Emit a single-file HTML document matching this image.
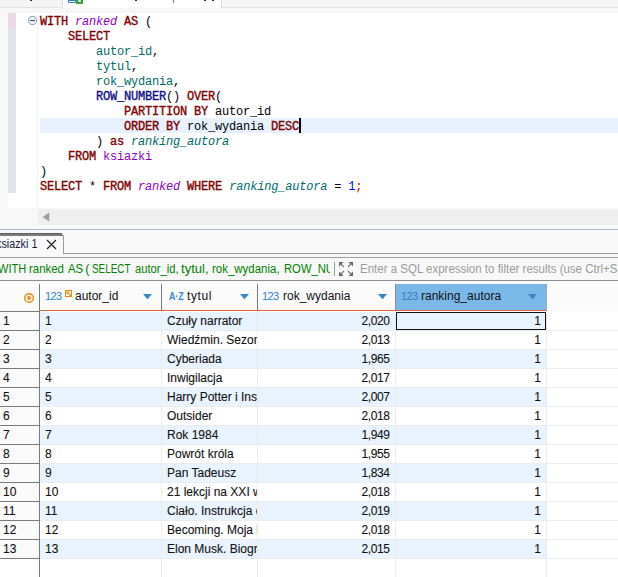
<!DOCTYPE html>
<html><head><meta charset="utf-8">
<style>
*{margin:0;padding:0;box-sizing:border-box}
html,body{width:618px;height:577px;overflow:hidden;background:#fff}
body{position:relative;font-family:"Liberation Sans",sans-serif}
.a{position:absolute}
.code{position:absolute;left:40px;top:15px;font-family:"Liberation Mono",monospace;font-size:12px;letter-spacing:-0.2px;line-height:15px;white-space:pre;color:#000}
.k{color:#800000;font-weight:normal;-webkit-text-stroke:0.35px #800000}
.it{font-style:italic;color:#9000c8}
.cn{color:#006868}
.ti{font-style:italic;color:#006a6a}
.fn{color:#10108a;-webkit-text-stroke:0.35px #10108a}
.tb{color:#9000c8}
.num{color:#0000ff}
.red{color:#e00000}
.tbl{font-size:12px;color:#111;white-space:nowrap}
.rn{position:absolute;left:0;width:40px;height:19px;border-bottom:1px solid #7a7a7a;border-right:1px solid #7a7a7a;padding-left:3px;line-height:18px;background:#fafafa;font-size:12px;color:#111;-webkit-text-stroke:0.1px #111}
.row{position:absolute;left:40px;width:578px;height:19px;border-bottom:1px solid #ececec}
.c{position:absolute;top:0;height:18px;line-height:18px;font-size:12px;color:#111;-webkit-text-stroke:0.1px #111;overflow:hidden;white-space:nowrap}
.num3{line-height:16px;font-size:11px;letter-spacing:-0.6px;color:#2f84d0}
.fw{position:absolute;top:3px;line-height:16px;font-size:12.5px;color:#008000;white-space:pre;transform-origin:0 0}
.vl{position:absolute;width:1px;background:#ececec}
</style></head><body>
<!-- top tab strip -->
<div class="a" style="left:0;top:0;width:618px;height:13px;background:#f6f6f6"></div>
<div class="a" style="left:0;top:7px;width:618px;height:1px;background:#e3e3e3"></div>
<div class="a" style="left:0;top:0;width:63px;height:7px;background:#f4f4f4;border-right:1px solid #dcdcdc"></div>
<div class="a" style="left:63px;top:0;width:159px;height:8px;background:#fff;border-right:1px solid #dcdcdc"></div>
<div class="a" style="left:68px;top:-3px;width:8px;height:6px;background:#2f7ccc;border-radius:1.5px"></div><div class="a" style="left:69px;top:1px;width:6px;height:1px;background:#fff"></div>
<div class="a" style="left:76px;top:0;width:7px;height:4px;background:#3ca23c"></div><div class="a" style="left:78px;top:0;width:3px;height:2px;background:#d8f0d8;border-radius:1px"></div>
<div class="a" style="left:30px;top:0;width:2px;height:1px;background:#333"></div>
<div class="a" style="left:135px;top:0;width:2px;height:1px;background:#333"></div>
<div class="a" style="left:173px;top:0;width:1px;height:3px;background:#3a7bd5"></div>
<div class="a" style="left:204px;top:0;width:2px;height:1px;background:#333"></div>
<div class="a" style="left:212px;top:0;width:2px;height:1px;background:#333"></div>

<!-- editor -->
<div class="a" style="left:0;top:13px;width:8px;height:195px;background:#f8f8f8"></div>
<div class="a" style="left:8px;top:13px;width:8px;height:15px;background:#ead9ea"></div>
<div class="a" style="left:8px;top:28px;width:8px;height:165px;background:#e3e3f0"></div>
<div class="a" style="left:37px;top:13px;width:1px;height:195px;background:#f3f3f3"></div>
<!-- fold icon -->
<svg class="a" style="left:27px;top:15px" width="11" height="11" viewBox="0 0 11 11"><circle cx="5.5" cy="5.5" r="4.1" fill="#eef5fc" stroke="#9ea9bc" stroke-width="1.1"/><line x1="3" y1="5.5" x2="8" y2="5.5" stroke="#4a5466" stroke-width="1.2"/></svg>
<!-- current line -->
<div class="a" style="left:40px;top:118px;width:578px;height:15px;background:#e8f2fe"></div>
<div class="code"><span class="k">WITH</span> <span class="it">ranked</span> <span class="k">AS</span> (
    <span class="k">SELECT</span>
        <span class="cn">autor_id</span>,
        <span class="cn">tytul</span>,
        <span class="cn">rok_wydania</span>,
        <span class="fn">ROW_NUMBER</span>() <span class="k">OVER</span>(
            <span class="k">PARTITION BY</span> autor_id
            <span class="k">ORDER BY</span> rok_wydania <span class="k">DESC</span>
        ) <span class="k">as</span> <span class="ti">ranking_autora</span>
    <span class="k">FROM</span> <span class="tb">ksiazki</span>
)
<span class="k">SELECT</span> * <span class="k">FROM</span> <span class="it">ranked</span> <span class="k">WHERE</span> <span class="ti">ranking_autora</span> = <span class="num">1</span><span class="red">;</span></div>
<div class="a" style="left:299px;top:118px;width:2px;height:15px;background:#000"></div>

<!-- h scrollbar -->
<div class="a" style="left:0;top:208px;width:618px;height:22px;background:#f8f8f8"></div>
<div class="a" style="left:38px;top:209px;width:580px;height:16px;background:#efefef"></div>
<svg class="a" style="left:42px;top:212px" width="8" height="10"><path d="M1 5 L7 1 L7 9 Z" fill="#9c9c9c" stroke="#9c9c9c" stroke-width="0.6" stroke-linejoin="round"/></svg>
<div class="a" style="left:0;top:229px;width:618px;height:1px;background:#a7bbd3"></div>

<!-- results tab strip -->
<div class="a" style="left:0;top:230px;width:618px;height:51px;background:#f8f8f8"></div>
<svg class="a" style="left:0;top:233px" width="65" height="4"><path d="M0 0H61L63.5 2.5V3H0Z" fill="#7a7a7a"/><path d="M0 0H61L62 1H0Z" fill="#5e5e5e"/></svg>
<div class="a" style="left:63px;top:236px;width:1px;height:18px;background:#9a9a9a"></div>
<div class="a" style="left:63px;top:253px;width:555px;height:1px;background:#9a9a9a"></div>
<div class="a tbl" style="left:-4px;top:236px;line-height:16px;font-size:12px;color:#1a1a3a;transform:scaleX(0.9);transform-origin:0 0">ksiazki 1</div>
<svg class="a" style="left:46px;top:239px" width="11" height="11"><path d="M1 1 L10 10 M10 1 L1 10" stroke="#222" stroke-width="1.2"/></svg>

<!-- filter bar -->
<div class="a" style="left:0;top:257px;width:618px;height:1px;background:#a0a0a0"></div>
<div class="a" style="left:0;top:280px;width:618px;height:1px;background:#8c8c8c"></div>
<div class="a" style="left:0;top:258px;width:330px;height:22px;overflow:hidden"><span class="fw" style="left:-1.8px;transform:scaleX(0.88)">WITH</span><span class="fw" style="left:28.89px;transform:scaleX(0.9135)">ranked</span><span class="fw" style="left:67.5px;transform:scaleX(0.9062)">AS</span><span class="fw" style="left:85.2px;transform:scaleX(1.0)">(</span><span class="fw" style="left:91.9px;transform:scaleX(0.79)">SELECT</span><span class="fw" style="left:134.5px;transform:scaleX(0.8979)">autor_id,</span><span class="fw" style="left:180.8px;transform:scaleX(1.0462)">tytul,</span><span class="fw" style="left:212.48px;transform:scaleX(0.9181)">rok_wydania,</span><span class="fw" style="left:284.4px;transform:scaleX(0.9)">ROW_NUMBER()</span></div>
<div class="a" style="left:334px;top:262px;width:1px;height:14px;background:#9a9a9a"></div>
<svg class="a" style="left:339px;top:262px" width="14" height="14" viewBox="0 0 14 14"><g fill="#666"><path d="M0 0H4.5L0 4.5Z"/><path d="M14 0H9.5L14 4.5Z"/><path d="M0 14V9.5L4.5 14Z"/><path d="M14 14H9.5L14 9.5Z"/></g><g stroke="#777" stroke-width="1.1"><path d="M1.5 1.5L5 5M12.5 1.5L9 5M1.5 12.5L5 9M12.5 12.5L9 9"/></g></svg>
<div class="a tbl" style="left:360px;top:261px;line-height:16px;font-size:12.5px;color:#9a9a9a;transform:scaleX(0.92);transform-origin:0 0">Enter a SQL expression to filter results (use Ctrl+Space)</div>

<!-- table header -->
<div class="a" style="left:0;top:281px;width:618px;height:30px;background:#fbfbfb"></div>
<div class="a" style="left:396px;top:284px;width:151px;height:27px;background:#7ab8e8;border-right:1px solid #a8a8a8"></div>
<div class="a" style="left:40px;top:310px;width:506px;height:1px;background:#e0603a"></div>
<div class="a" style="left:39px;top:284px;width:1px;height:293px;background:#7a7a7a"></div>
<div class="a" style="left:161px;top:284px;width:1px;height:27px;background:#7a7a7a"></div>
<div class="a" style="left:257px;top:284px;width:1px;height:27px;background:#7a7a7a"></div>
<div class="a" style="left:395px;top:284px;width:1px;height:27px;background:#8a8a8a"></div>
<svg class="a" style="left:23px;top:292px" width="12" height="12"><circle cx="6" cy="6" r="4.3" fill="none" stroke="#f5850a" stroke-width="1.4"/><circle cx="6" cy="6" r="1.9" fill="#f5850a"/></svg>

<div class="a tbl num3" style="left:45px;top:288px">123</div>
<svg class="a" style="left:65px;top:290px" width="7" height="7"><rect x="0.5" y="0.5" width="6" height="6" fill="#fff" stroke="#f5850a"/><path d="M1.5 1.5H4.8L1.5 4.8Z" fill="#f5850a"/><path d="M2.5 2.5L6 6" stroke="#f5850a" stroke-width="1.1"/></svg>
<div class="a tbl" style="left:75px;top:288px;line-height:16px">autor_id</div>
<svg class="a" style="left:143px;top:294px" width="9" height="5"><path d="M0 0H9L4.5 5.2Z" fill="#3586c8"/></svg>

<div class="a tbl" style="left:169px;top:288px;line-height:16px;color:#3a88d0;font-size:11px;font-weight:bold;transform:scaleX(0.8);transform-origin:0 0">A·Z</div>
<div class="a tbl" style="left:187px;top:288px;line-height:16px;letter-spacing:0.6px">tytul</div>
<svg class="a" style="left:240px;top:294px" width="9" height="5"><path d="M0 0H9L4.5 5.2Z" fill="#3586c8"/></svg>

<div class="a tbl num3" style="left:262px;top:288px">123</div>
<div class="a tbl" style="left:283px;top:288px;line-height:16px">rok_wydania</div>
<svg class="a" style="left:378px;top:294px" width="9" height="5"><path d="M0 0H9L4.5 5.2Z" fill="#3586c8"/></svg>

<div class="a tbl num3" style="left:401px;top:288px;color:#3a7cc0">123</div>
<div class="a tbl" style="left:421px;top:288px;line-height:16px">ranking_autora</div>
<svg class="a" style="left:528px;top:294px" width="9" height="5"><path d="M0 0H9L4.5 5.2Z" fill="#3a84c4"/></svg>

<!-- rows -->
<div class="rn" style="top:312px">1</div>
<div class="row" style="top:312px;background:linear-gradient(to right,#e9f3fd 506px,#fff 506px)"><div class="c" style="left:5px;width:115px">1</div><div class="c" style="left:127px;width:90px">Czuły narrator</div><div class="c" style="left:218px;width:131.5px;text-align:right;letter-spacing:-0.4px">2,020</div><div class="c" style="left:356px;width:145px;text-align:right">1</div></div>
<div class="rn" style="top:331px">2</div>
<div class="row" style="top:331px;background:linear-gradient(to right,#fff 506px,#fff 506px)"><div class="c" style="left:5px;width:115px">2</div><div class="c" style="left:127px;width:90px">Wiedźmin. Sezon burz</div><div class="c" style="left:218px;width:131.5px;text-align:right;letter-spacing:-0.4px">2,013</div><div class="c" style="left:356px;width:145px;text-align:right">1</div></div>
<div class="rn" style="top:350px">3</div>
<div class="row" style="top:350px;background:linear-gradient(to right,#e9f3fd 506px,#fff 506px)"><div class="c" style="left:5px;width:115px">3</div><div class="c" style="left:127px;width:90px">Cyberiada</div><div class="c" style="left:218px;width:131.5px;text-align:right;letter-spacing:-0.4px">1,965</div><div class="c" style="left:356px;width:145px;text-align:right">1</div></div>
<div class="rn" style="top:369px">4</div>
<div class="row" style="top:369px;background:linear-gradient(to right,#fff 506px,#fff 506px)"><div class="c" style="left:5px;width:115px">4</div><div class="c" style="left:127px;width:90px">Inwigilacja</div><div class="c" style="left:218px;width:131.5px;text-align:right;letter-spacing:-0.4px">2,017</div><div class="c" style="left:356px;width:145px;text-align:right">1</div></div>
<div class="rn" style="top:388px">5</div>
<div class="row" style="top:388px;background:linear-gradient(to right,#e9f3fd 506px,#fff 506px)"><div class="c" style="left:5px;width:115px">5</div><div class="c" style="left:127px;width:90px">Harry Potter i Insygnia</div><div class="c" style="left:218px;width:131.5px;text-align:right;letter-spacing:-0.4px">2,007</div><div class="c" style="left:356px;width:145px;text-align:right">1</div></div>
<div class="rn" style="top:407px">6</div>
<div class="row" style="top:407px;background:linear-gradient(to right,#fff 506px,#fff 506px)"><div class="c" style="left:5px;width:115px">6</div><div class="c" style="left:127px;width:90px">Outsider</div><div class="c" style="left:218px;width:131.5px;text-align:right;letter-spacing:-0.4px">2,018</div><div class="c" style="left:356px;width:145px;text-align:right">1</div></div>
<div class="rn" style="top:426px">7</div>
<div class="row" style="top:426px;background:linear-gradient(to right,#e9f3fd 506px,#fff 506px)"><div class="c" style="left:5px;width:115px">7</div><div class="c" style="left:127px;width:90px">Rok 1984</div><div class="c" style="left:218px;width:131.5px;text-align:right;letter-spacing:-0.4px">1,949</div><div class="c" style="left:356px;width:145px;text-align:right">1</div></div>
<div class="rn" style="top:445px">8</div>
<div class="row" style="top:445px;background:linear-gradient(to right,#fff 506px,#fff 506px)"><div class="c" style="left:5px;width:115px">8</div><div class="c" style="left:127px;width:90px">Powrót króla</div><div class="c" style="left:218px;width:131.5px;text-align:right;letter-spacing:-0.4px">1,955</div><div class="c" style="left:356px;width:145px;text-align:right">1</div></div>
<div class="rn" style="top:464px">9</div>
<div class="row" style="top:464px;background:linear-gradient(to right,#e9f3fd 506px,#fff 506px)"><div class="c" style="left:5px;width:115px">9</div><div class="c" style="left:127px;width:90px">Pan Tadeusz</div><div class="c" style="left:218px;width:131.5px;text-align:right;letter-spacing:-0.4px">1,834</div><div class="c" style="left:356px;width:145px;text-align:right">1</div></div>
<div class="rn" style="top:483px">10</div>
<div class="row" style="top:483px;background:linear-gradient(to right,#fff 506px,#fff 506px)"><div class="c" style="left:5px;width:115px">10</div><div class="c" style="left:127px;width:90px">21 lekcji na XXI wiek</div><div class="c" style="left:218px;width:131.5px;text-align:right;letter-spacing:-0.4px">2,018</div><div class="c" style="left:356px;width:145px;text-align:right">1</div></div>
<div class="rn" style="top:502px">11</div>
<div class="row" style="top:502px;background:linear-gradient(to right,#e9f3fd 506px,#fff 506px)"><div class="c" style="left:5px;width:115px">11</div><div class="c" style="left:127px;width:90px">Ciało. Instrukcja obsługi</div><div class="c" style="left:218px;width:131.5px;text-align:right;letter-spacing:-0.4px">2,019</div><div class="c" style="left:356px;width:145px;text-align:right">1</div></div>
<div class="rn" style="top:521px">12</div>
<div class="row" style="top:521px;background:linear-gradient(to right,#fff 506px,#fff 506px)"><div class="c" style="left:5px;width:115px">12</div><div class="c" style="left:127px;width:90px">Becoming. Moja historia</div><div class="c" style="left:218px;width:131.5px;text-align:right;letter-spacing:-0.4px">2,018</div><div class="c" style="left:356px;width:145px;text-align:right">1</div></div>
<div class="rn" style="top:540px">13</div>
<div class="row" style="top:540px;background:linear-gradient(to right,#e9f3fd 506px,#fff 506px)"><div class="c" style="left:5px;width:115px">13</div><div class="c" style="left:127px;width:90px">Elon Musk. Biografia</div><div class="c" style="left:218px;width:131.5px;text-align:right;letter-spacing:-0.4px">2,015</div><div class="c" style="left:356px;width:145px;text-align:right">1</div></div>

<div class="vl" style="left:161px;top:311px;height:266px"></div>
<div class="vl" style="left:257px;top:311px;height:266px"></div>
<div class="vl" style="left:395px;top:311px;height:266px"></div>
<div class="vl" style="left:546px;top:311px;height:266px"></div>
<div class="a" style="left:0;top:311px;width:40px;height:1px;background:#7a7a7a"></div>
<div class="a" style="left:396px;top:312px;width:150px;height:18px;border:1px solid #111"></div>
</body></html>
